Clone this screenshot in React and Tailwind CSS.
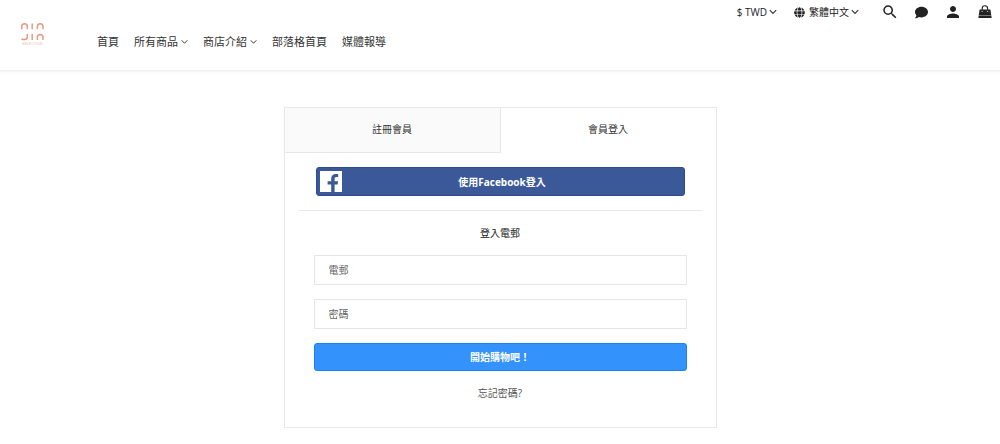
import { useState } from "react";
import { MdSearch, MdPerson } from "react-icons/md";
import { FaComment, FaGlobe } from "react-icons/fa";

function Chevron({ className = "w-2" }) {
  return (
    <svg viewBox="0 0 8 6" className={`h-[6px] ${className}`} fill="none" stroke="#333" strokeWidth="1.1" aria-hidden="true">
      <path d="M0.8 1.1 4 4.4 7.2 1.1" />
    </svg>
  );
}

function Logo() {
  return (
    <svg viewBox="0 0 24 24" className="size-6" fill="none" stroke="#e59a83" strokeWidth="1.5" aria-label="nin jin selection">
      <path d="M1.7 7.2V4.6a2.8 2.8 0 0 1 5.6 0V7.2M12.2 1.4V7.2M17.4 7.2V4.6a2.8 2.8 0 0 1 5.6 0V7.2" />
      <path d="M7.3 12v2.8a2.8 2.8 0 0 1-2.8 2.8q-1.800 0-3-.6M12.2 12v6M17.4 18v-2.800a2.8 2.8 0 0 1 5.6 0V18" />
      <text x="12.2" y="23" textAnchor="middle" fontSize="3.6" fill="#f0bdae" stroke="none" fontFamily="Liberation Sans, sans-serif">
        SELECTION
      </text>
    </svg>
  );
}

function BagIcon() {
  return (
    <svg viewBox="0 0 14 14" className="size-[14px]" aria-hidden="true">
      <path d="M4.2 6V3.4a2.7 2.7 0 0 1 5.4 0V6" fill="none" stroke="#222" strokeWidth="1.1" />
      <path d="M1.6 4.6h10.8l.8 5.6H.8z" fill="#222" />
      <path d="M.6 10.6h12.8l.2 2.4H.4z" fill="#222" />
      <circle cx="4.2" cy="6.4" r=".7" fill="#bbb" />
      <circle cx="9.6" cy="6.4" r=".7" fill="#bbb" />
    </svg>
  );
}

function Picker({ label, options }) {
  return (
    <span className="flex items-center gap-[2px]">
      <select aria-label={label} className="field-sizing-content cursor-pointer appearance-none bg-transparent text-[10px] leading-4">
        {options.map((o) => (
          <option key={o}>{o}</option>
        ))}
      </select>
      <Chevron />
    </span>
  );
}

const navItems = [
  { name: "首頁" },
  { name: "所有商品", menu: true },
  { name: "商店介紹", menu: true },
  { name: "部落格首頁" },
  { name: "媒體報導" },
];

function Header() {
  return (
    <header className="flex items-start border-b border-[#f0f0f0] pr-2 pl-5 shadow-[0_1px_3px_rgba(0,0,0,0.05)]">
      <a href="#home" className="mt-[22px] mb-6 shrink-0">
        <Logo />
      </a>
      <nav className="mt-[34px] ml-[53px] flex shrink-0 gap-[15px] text-[11px] leading-4">
        {navItems.map((item) =>
          item.menu ? (
            <button key={item.name} type="button" aria-haspopup="menu" className="flex items-center gap-[3px]">
              {item.name}
              <Chevron className="w-[7px]" />
            </button>
          ) : (
            <a key={item.name} href="#page">
              {item.name}
            </a>
          )
        )}
      </nav>
      <div className="mt-[3px] ml-auto flex shrink-0 items-center text-[#222]">
        <Picker label="貨幣" options={["$ TWD", "$ USD"]} />
        <span className="ml-[17px] flex items-center gap-1">
          <FaGlobe className="size-[11px]" />
          <Picker label="語言" options={["繁體中文", "English"]} />
        </span>
        <div className="ml-[22px] flex items-center gap-4">
          <button type="button" aria-label="搜尋">
            <MdSearch className="size-[18px]" />
          </button>
          <button type="button" aria-label="訊息">
            <FaComment className="size-[13px]" />
          </button>
          <button type="button" aria-label="會員">
            <MdPerson className="size-[18px]" />
          </button>
          <button type="button" aria-label="購物車">
            <BagIcon />
          </button>
        </div>
      </div>
    </header>
  );
}

function Tab({ active, onClick, children }) {
  return (
    <button
      type="button"
      role="tab"
      aria-selected={active}
      onClick={onClick}
      className={`flex-1 pt-[13px] pb-[15px] leading-4 ${active ? "border-b border-transparent" : "border-r border-b border-[#e8e8e8] bg-[#fafafa]"}`}
    >
      {children}
    </button>
  );
}

function Field({ label, type }) {
  return (
    <input
      type={type}
      aria-label={label}
      placeholder={label}
      className="block w-full border border-[#e6e6e6] px-[14px] py-[6px] leading-4 placeholder:text-[#666]"
    />
  );
}

export default function App() {
  const [tab, setTab] = useState("login");
  return (
    <div className="bg-white font-['Open_Sans','Noto_Sans_CJK_TC',sans-serif] text-[10px] text-[#333]">
      <Header />
      <main className="px-4 pt-9 pb-4">
        <section className="mx-auto w-full max-w-[433px] border border-[#e8e8e8]">
          <div role="tablist" className="flex">
            <Tab active={tab === "register"} onClick={() => setTab("register")}>
              註冊會員
            </Tab>
            <Tab active={tab === "login"} onClick={() => setTab("login")}>
              會員登入
            </Tab>
          </div>
          <div className="px-[14px] pt-[14px] pb-[26px]">
            <div className="px-[17px]">
              <button
                type="button"
                className="grid w-full grid-cols-[22px_1fr_18px] items-center rounded-[3px] border border-[#2f4c8a] bg-[#3b5998] p-[3px] font-bold text-white"
              >
                <svg viewBox="0 0 22 21" className="h-[21px] w-[22px]" aria-hidden="true">
                  <path fill="#fff" d="M0 0h22v21H0z" />
                  <path
                    fill="#3b5998"
                    d="M11.2 21v-7.600H7.600v-3.100h3.600V8c0-3.300 1.900-5 4.700-5 1 0 1.800.1 2.300.2v2.800h-1.700c-1.500 0-1.900.8-1.900 1.900v2.400h3.500l-.5 3.100h-3V21z"
                  />
                </svg>
                <span className="leading-4">使用Facebook登入</span>
              </button>
            </div>
            <hr className="mt-[14px] border-[#e8e8e8]" />
            <form className="flex flex-col gap-[14px] px-[15px] pt-[14px]" onSubmit={(e) => e.preventDefault()}>
              <h2 className="text-center leading-4 text-[#222]">登入電郵</h2>
              <Field label="電郵" type="email" />
              <Field label="密碼" type="password" />
              <button
                type="submit"
                className="rounded-[3px] border border-[#1c82f2] bg-[#3392fb] py-[5px] leading-4 font-bold text-white"
              >
                開始購物吧！
              </button>
              <a href="#forgot" className="self-center leading-4 text-[#555]">
                忘記密碼?
              </a>
            </form>
          </div>
        </section>
      </main>
    </div>
  );
}
